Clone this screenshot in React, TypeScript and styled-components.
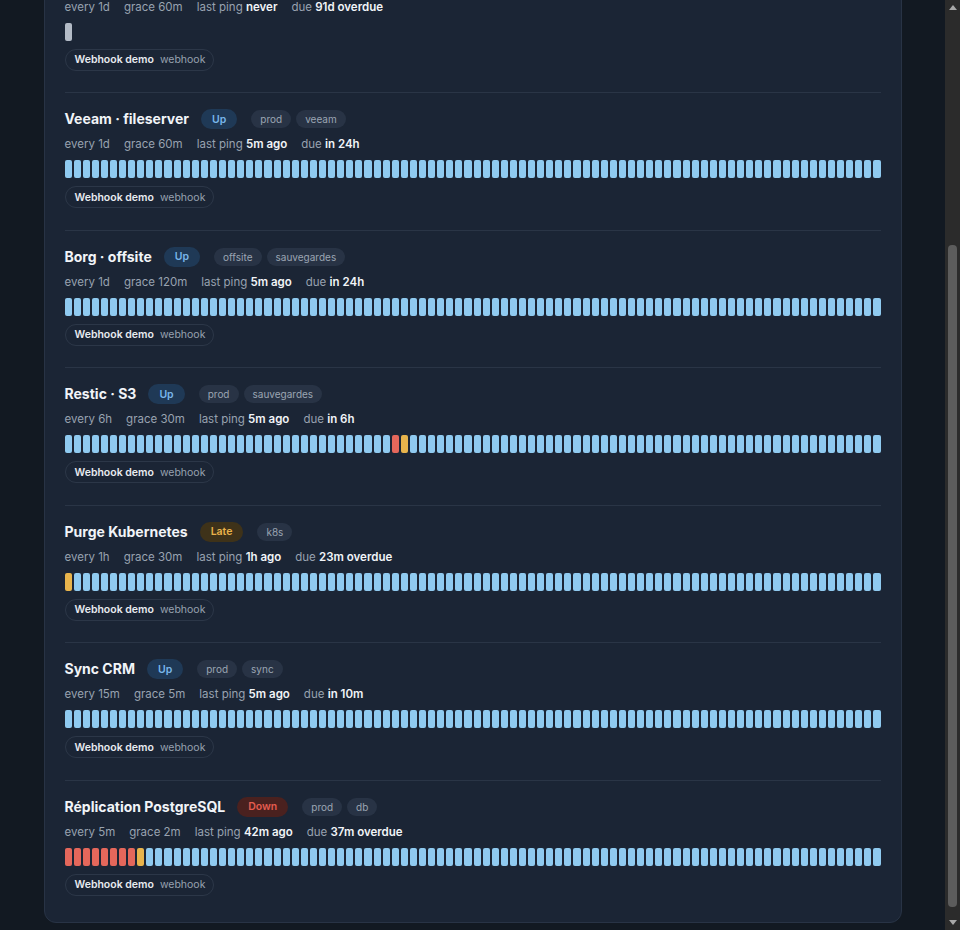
import styled, { createGlobalStyle } from "styled-components";

type Beat = "up" | "down" | "late" | "none";
type Status = "up" | "late" | "down" | "new";

interface Check {
  name: string;
  status: Status;
  tags: string[];
  every: string;
  grace: string;
  lastPing: string;
  due: string;
  beats: Beat[];
}

const BAR_COUNT = 90;

function beats(overrides: Record<number, Beat> = {}): Beat[] {
  return Array.from({ length: BAR_COUNT }, (_, i) => overrides[i] ?? "up");
}

const checks: Check[] = [
  {
    name: "Rsync · archives",
    status: "new",
    tags: ["archives"],
    every: "1d",
    grace: "60m",
    lastPing: "never",
    due: "91d overdue",
    beats: ["none"],
  },
  {
    name: "Veeam · fileserver",
    status: "up",
    tags: ["prod", "veeam"],
    every: "1d",
    grace: "60m",
    lastPing: "5m ago",
    due: "in 24h",
    beats: beats(),
  },
  {
    name: "Borg · offsite",
    status: "up",
    tags: ["offsite", "sauvegardes"],
    every: "1d",
    grace: "120m",
    lastPing: "5m ago",
    due: "in 24h",
    beats: beats(),
  },
  {
    name: "Restic · S3",
    status: "up",
    tags: ["prod", "sauvegardes"],
    every: "6h",
    grace: "30m",
    lastPing: "5m ago",
    due: "in 6h",
    beats: beats({ 36: "down", 37: "late" }),
  },
  {
    name: "Purge Kubernetes",
    status: "late",
    tags: ["k8s"],
    every: "1h",
    grace: "30m",
    lastPing: "1h ago",
    due: "23m overdue",
    beats: beats({ 0: "late" }),
  },
  {
    name: "Sync CRM",
    status: "up",
    tags: ["prod", "sync"],
    every: "15m",
    grace: "5m",
    lastPing: "5m ago",
    due: "in 10m",
    beats: beats(),
  },
  {
    name: "Réplication PostgreSQL",
    status: "down",
    tags: ["prod", "db"],
    every: "5m",
    grace: "2m",
    lastPing: "42m ago",
    due: "37m overdue",
    beats: beats({ 0: "down", 1: "down", 2: "down", 3: "down", 4: "down", 5: "down", 6: "down", 7: "down", 8: "late" }),
  },
];

const statusLabel: Record<Status, string> = {
  up: "Up",
  late: "Late",
  down: "Down",
  new: "New",
};

export default function App() {
  return (
    <>
      <GlobalStyle />
      <Screen>
        <Viewport>
          <Page>
            <Card>
              {checks.map((check) => (
                <Row key={check.name}>
                  <TitleLine>
                    <Name>{check.name}</Name>
                    <StatusBadge $status={check.status}>{statusLabel[check.status]}</StatusBadge>
                    <Tags>
                      {check.tags.map((t) => (
                        <Tag key={t}>{t}</Tag>
                      ))}
                    </Tags>
                  </TitleLine>
                  <Meta>
                    <span>every {check.every}</span>
                    <span>grace {check.grace}</span>
                    <span>
                      last ping <b>{check.lastPing}</b>
                    </span>
                    <span>
                      due <b>{check.due}</b>
                    </span>
                  </Meta>
                  <Bars>
                    {check.beats.map((b, i) => (
                      <Bar key={i} $kind={b} />
                    ))}
                  </Bars>
                  <Channel>
                    <strong>Webhook demo</strong>
                    <span>webhook</span>
                  </Channel>
                </Row>
              ))}
            </Card>
          </Page>
        </Viewport>
        <ScrollTrack>
          <Arrow $dir="up" />
          <Rail>
            <Thumb />
          </Rail>
          <Arrow $dir="down" />
        </ScrollTrack>
      </Screen>
    </>
  );
}

const GlobalStyle = createGlobalStyle`
  html, body {
    margin: 0;
    height: 100%;
  }

  body {
    background: #121922;
    color: #e6e9ee;
    font-family: Inter, "Noto Sans", sans-serif;
    overflow: hidden;
  }
`;

const Screen = styled.div`
  display: flex;
  height: 100vh;
`;

/* page is scrolled to its end: content sits at the bottom, the top is clipped */
const Viewport = styled.main`
  flex: 1;
  display: flex;
  flex-direction: column;
  justify-content: flex-end;
  overflow: hidden;
`;

const Page = styled.div`
  flex-shrink: 0;
  width: 858px;
  margin: 0 auto;
  padding-bottom: 7px;
`;

const Card = styled.section`
  background: #1b2535;
  border: 1px solid #283345;
  border-radius: 12px;
  padding: 0 20px 5px;
`;

const Row = styled.article`
  display: flex;
  flex-direction: column;
  padding: 16px 0 21.5px;

  & + & {
    border-top: 1px solid #2a3546;
  }
`;

const TitleLine = styled.div`
  display: flex;
  align-items: center;
  height: 20px;
`;

const Name = styled.h3`
  margin: 0;
  font-size: 14px;
  line-height: 20px;
  font-weight: 700;
  color: #f1f4f8;
`;

const badgeColors: Record<Status, { bg: string; fg: string }> = {
  up: { bg: "#1f3956", fg: "#78b6ea" },
  late: { bg: "#3e3219", fg: "#e9b24a" },
  down: { bg: "#4a211f", fg: "#e35c4f" },
  new: { bg: "#2a3546", fg: "#aab3c0" },
};

const StatusBadge = styled.span<{ $status: Status }>`
  margin-left: 12px;
  height: 20px;
  padding: 0 11px;
  border-radius: 10px;
  display: inline-flex;
  align-items: center;
  font-size: 10.5px;
  font-weight: 600;
  background: ${(p) => badgeColors[p.$status].bg};
  color: ${(p) => badgeColors[p.$status].fg};
`;

const Tags = styled.div`
  display: flex;
  gap: 5px;
  margin-left: 14px;
`;

const Tag = styled.span`
  height: 18px;
  padding: 0 9px;
  border-radius: 9px;
  display: inline-flex;
  align-items: center;
  background: #283345;
  color: #9ba5b3;
  font-size: 10px;
`;

const Meta = styled.div`
  display: flex;
  gap: 14px;
  margin-top: 7px;
  font-size: 11.5px;
  line-height: 16px;
  color: #98a2b0;

  b {
    font-weight: 600;
    color: #f1f4f8;
  }
`;

const beatColors: Record<Beat, string> = {
  up: "#8fcaf0",
  down: "#e4675b",
  late: "#e8b44c",
  none: "#b3bbc6",
};

const Bars = styled.div`
  display: grid;
  grid-template-columns: repeat(${BAR_COUNT}, 1fr);
  gap: 2px;
  margin-top: 8px;
  height: 18px;
`;

const Bar = styled.span<{ $kind: Beat }>`
  border-radius: 2px;
  background: ${(p) => beatColors[p.$kind]};
`;

const Channel = styled.div`
  align-self: flex-start;
  display: inline-flex;
  align-items: center;
  gap: 6px;
  margin-top: 8px;
  height: 22px;
  padding: 0 8px 0 9px;
  border: 1px solid #2c3748;
  border-radius: 11px;
  box-sizing: border-box;
  font-size: 10.5px;

  strong {
    font-weight: 600;
    color: #e8ebf0;
  }

  span {
    color: #98a2b0;
  }
`;

const ScrollTrack = styled.div`
  width: 15px;
  flex-shrink: 0;
  display: flex;
  flex-direction: column;
  background: #2b2b2b;
`;

const Arrow = styled.div<{ $dir: "up" | "down" }>`
  height: 15px;
  display: flex;
  align-items: center;
  justify-content: center;

  &::before {
    content: "";
    width: 0;
    height: 0;
    border-left: 4px solid transparent;
    border-right: 4px solid transparent;
    ${(p) => (p.$dir === "up" ? "border-bottom" : "border-top")}: 5px solid #a8a8a8;
  }
`;

const Rail = styled.div`
  flex: 1;
  display: flex;
  flex-direction: column;
  justify-content: flex-end;
  padding: 0 3px 8px;
`;

const Thumb = styled.div`
  height: 662px;
  border-radius: 4px;
  background: #5c5c5c;
`;
